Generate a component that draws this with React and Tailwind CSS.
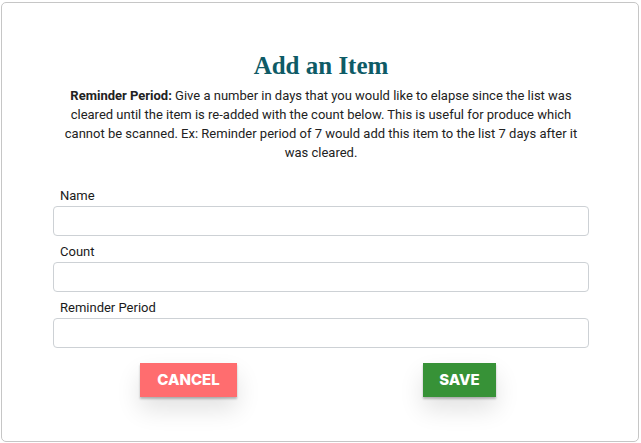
export default function App() {
  const field = (label) => (
    <div className="flex flex-col">
      <label className="pl-[7px] text-[13px] leading-[16px] text-[#1a1a1a] mb-[2px]">{label}</label>
      <input className="h-[30px] w-full rounded-[4px] border border-[#cdd1d5] bg-white outline-none" />
    </div>
  );
  return (
    <div className="h-[443px] w-[641px] bg-white pt-[2px] pl-[1px]" style={{ fontFamily: "Roboto, 'Noto Sans', sans-serif" }}>
      <div className="h-[440px] w-[638px] rounded-[5px] border border-[#c6c6c6] bg-white">
        <div className="w-[536px] pt-[48px] ml-[51px]">
          <h1 className="text-center text-[25px] font-bold leading-[30px] text-[#0e5b66]" style={{ fontFamily: "'Liberation Serif', 'DejaVu Serif', serif" }}>
            Add an Item
          </h1>
          <p className="mt-[5px] text-center text-[13px] leading-[19px] text-[#222]">
            <b className="font-bold">Reminder Period:</b> Give a number in days that you would like to elapse since the list was cleared until the item is re-added with the count below. This is useful for produce which cannot be scanned. Ex: Reminder period of 7 would add this item to the list 7 days after it was cleared.
          </p>
          <div className="mt-[26px] flex flex-col gap-[8px]">
            {field("Name")}
            {field("Count")}
            {field("Reminder Period")}
          </div>
          <div className="mt-[15px] flex pl-[87px]">
            <button className="h-[34px] w-[97px] bg-[#ff6d6f] text-[15px] font-extrabold text-white shadow-[0_2px_2px_rgba(0,0,0,0.25),0_12px_24px_rgba(0,0,0,0.12)]" style={{ fontFamily: "Inter, sans-serif" }}>
              CANCEL
            </button>
            <button className="ml-[186px] h-[34px] w-[73px] bg-[#379237] text-[15px] font-extrabold text-white shadow-[0_2px_2px_rgba(0,0,0,0.25),0_12px_24px_rgba(0,0,0,0.12)]" style={{ fontFamily: "Inter, sans-serif" }}>
              SAVE
            </button>
          </div>
        </div>
      </div>
    </div>
  );
}
